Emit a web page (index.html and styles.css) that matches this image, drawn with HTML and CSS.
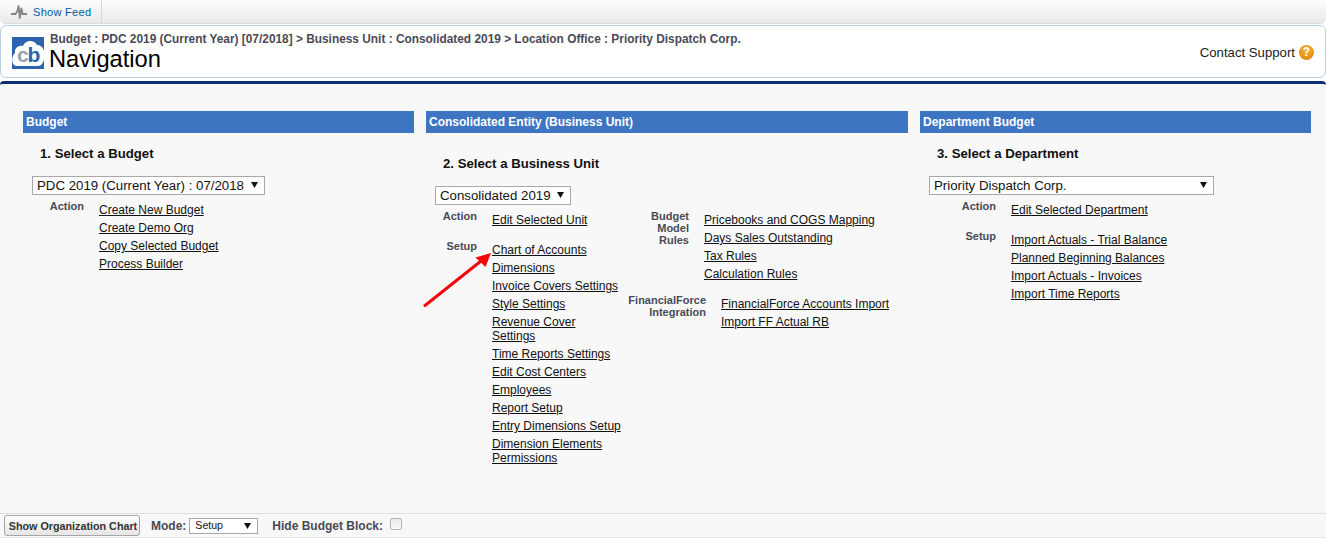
FILE: index.html
```html
<!DOCTYPE html>
<html lang="en">
<head>
    <meta charset="UTF-8">
    <meta name="viewport" content="width=device-width, initial-scale=1.0">
    <title>Navigation</title>
    <link rel="stylesheet" href="styles.css">
</head>
<body>

    <div class="feed-bar">
        <a href="#" class="feed-tab">
            <svg class="feed-icon" width="16" height="16" viewBox="0 0 16 16">
                <path d="M0 10H4.5L6.5 7L7.6 1.5L8.8 14.5L10.4 4L11.6 10H16" fill="none" stroke="#858585" stroke-width="1.8"/>
            </svg>
            Show Feed
        </a>
    </div>

    <div class="page-header">
        <div class="logo">
            <svg width="32" height="32" viewBox="0 0 32 32">
                <rect width="32" height="32" fill="#2c62ae"/>
                <path d="M5 29C-1 29 -1 19 3 16C2 11 7 8 11 9C13 3 22 2 25 8C30 8 33 13 32 17C33 22 31 29 26 29Z" fill="#fff"/>
                <text x="5" y="25" class="logo-c">c</text>
                <text x="15.5" y="25" class="logo-b">b</text>
            </svg>
        </div>
        <div class="header-text">
            <div class="breadcrumb">Budget : PDC 2019 (Current Year) [07/2018] &gt; Business Unit : Consolidated 2019 &gt; Location Office : Priority Dispatch Corp.</div>
            <h1>Navigation</h1>
        </div>
        <a href="#" class="support">
            Contact Support
            <span class="help-icon">?</span>
        </a>
    </div>

    <div class="main">
        <section class="col col-budget">
            <h2>Budget</h2>
            <h3>1. Select a Budget</h3>
            <select class="picker picker-budget">
                <option>PDC 2019 (Current Year) : 07/2018</option>
            </select>
            <div class="link-group label-budget">
                <span class="group-label">Action</span>
                <ul>
                    <li><a href="#">Create New Budget</a></li>
                    <li><a href="#">Create Demo Org</a></li>
                    <li><a href="#">Copy Selected Budget</a></li>
                    <li><a href="#">Process Builder</a></li>
                </ul>
            </div>
        </section>

        <section class="col col-unit">
            <h2>Consolidated Entity (Business Unit)</h2>
            <h3>2. Select a Business Unit</h3>
            <select class="picker picker-unit">
                <option>Consolidated 2019</option>
            </select>
            <div class="unit-columns">
                <div class="unit-left">
                    <div class="link-group label-unit">
                        <span class="group-label">Action</span>
                        <ul>
                            <li><a href="#">Edit Selected Unit</a></li>
                        </ul>
                    </div>
                    <div class="link-group label-unit setup-gap">
                        <span class="group-label">Setup</span>
                        <ul>
                            <li><a href="#">Chart of Accounts</a></li>
                            <li><a href="#">Dimensions</a></li>
                            <li><a href="#">Invoice Covers Settings</a></li>
                            <li><a href="#">Style Settings</a></li>
                            <li><a href="#">Revenue Cover Settings</a></li>
                            <li><a href="#">Time Reports Settings</a></li>
                            <li><a href="#">Edit Cost Centers</a></li>
                            <li><a href="#">Employees</a></li>
                            <li><a href="#">Report Setup</a></li>
                            <li><a href="#">Entry Dimensions Setup</a></li>
                            <li><a href="#">Dimension Elements Permissions</a></li>
                        </ul>
                    </div>
                </div>
                <div class="unit-right">
                    <div class="link-group label-model">
                        <span class="group-label">Budget<br>Model<br>Rules</span>
                        <ul>
                            <li><a href="#">Pricebooks and COGS Mapping</a></li>
                            <li><a href="#">Days Sales Outstanding</a></li>
                            <li><a href="#">Tax Rules</a></li>
                            <li><a href="#">Calculation Rules</a></li>
                        </ul>
                    </div>
                    <div class="link-group label-ff">
                        <span class="group-label">FinancialForce<br>Integration</span>
                        <ul>
                            <li><a href="#">FinancialForce Accounts Import</a></li>
                            <li><a href="#">Import FF Actual RB</a></li>
                        </ul>
                    </div>
                </div>
            </div>
        </section>

        <section class="col col-dept">
            <h2>Department Budget</h2>
            <h3>3. Select a Department</h3>
            <select class="picker picker-dept">
                <option>Priority Dispatch Corp.</option>
            </select>
            <div class="link-group label-dept">
                <span class="group-label">Action</span>
                <ul>
                    <li><a href="#">Edit Selected Department</a></li>
                </ul>
            </div>
            <div class="link-group label-dept setup-gap">
                <span class="group-label">Setup</span>
                <ul>
                    <li><a href="#">Import Actuals - Trial Balance</a></li>
                    <li><a href="#">Planned Beginning Balances</a></li>
                    <li><a href="#">Import Actuals - Invoices</a></li>
                    <li><a href="#">Import Time Reports</a></li>
                </ul>
            </div>
        </section>

        <!-- annotation drawn on top of the screenshot -->
        <svg class="arrow" width="70" height="56" viewBox="0 0 70 56">
            <path d="M2 54.5L58 10" stroke="#f5060c" stroke-width="3" stroke-linecap="round" fill="none"/>
            <path d="M68 2L52.5 6.5L62.5 16Z" fill="#f5060c"/>
        </svg>
    </div>

    <div class="footer">
        <button type="button" class="org-btn">Show Organization Chart</button>
        <label class="mode-label" for="mode">Mode:</label>
        <select id="mode" class="picker picker-mode">
            <option>Setup</option>
        </select>
        <label class="hide-label" for="hideBlock">Hide Budget Block:</label>
        <input type="checkbox" id="hideBlock" class="hide-check">
    </div>

</body>
</html>
```

FILE: styles.css
```css
/* Global */
body {
    font-family: 'Liberation Sans', Arial, sans-serif;
    margin: 0;
    padding: 0;
    background-color: #fff;
    color: #000;
    font-size: 12px;
}

/* Feed bar */
.feed-bar {
    height: 24px;
    width: 1326px;
    background: linear-gradient(#fdfdfd, #e9e9e9);
    border-bottom: 1px solid #dcdcdc;
    border-radius: 0 0 6px 6px;
    box-sizing: border-box;
    display: flex;
}

.feed-tab {
    width: 102px;
    box-sizing: border-box;
    padding-left: 11px;
    display: flex;
    align-items: center;
    gap: 6px;
    border-right: 1px solid #d5d5d5;
    color: #015ba7;
    text-decoration: none;
    font-size: 11px;
    letter-spacing: 0.3px;
}

/* Header */
.page-header {
    margin-top: 1px;
    height: 53px;
    width: 1326px;
    box-sizing: border-box;
    background-color: #fff;
    border: 1px solid #b5cfe3;
    border-radius: 6px;
    display: flex;
    align-items: flex-start;
}

.logo {
    margin: 11px 6px 0 11px;
    height: 32px;
}

.logo-c,
.logo-b {
    font-family: 'Liberation Sans', Arial, sans-serif;
    font-weight: bold;
    font-size: 21px;
}

.logo-c {
    fill: #98a1b0;
}

.logo-b {
    fill: #2c62ae;
}

.header-text {
    padding-top: 6px;
}

.breadcrumb {
    font-weight: bold;
    font-size: 11.88px;
    line-height: 14px;
    color: #4a4a56;
}

h1 {
    font-size: 23.7px;
    font-weight: normal;
    line-height: 27px;
    margin: 0 0 0 -1px;
}

.support {
    margin-left: auto;
    margin-top: 19px;
    margin-right: 11px;
    display: flex;
    align-items: center;
    gap: 4px;
    color: #222;
    text-decoration: none;
    font-size: 13.2px;
    line-height: 16px;
}

.help-icon {
    width: 15px;
    height: 15px;
    margin-top: -1px;
    border-radius: 50%;
    background: radial-gradient(circle at 50% 35%, #f9b233, #d9800c);
    color: #fff;
    font-weight: bold;
    font-size: 12px;
    line-height: 15px;
    text-align: center;
}

/* Main panel */
.main {
    position: relative;
    margin-top: 3px;
    width: 1326px;
    height: 432px;
    box-sizing: border-box;
    background-color: #f8f8f8;
    border-top: 3px solid #0b2f74;
    border-radius: 4px 4px 0 0;
    padding: 27px 15px 0 23px;
    display: flex;
    gap: 12px;
}

.col {
    min-width: 0;
}

.col-budget {
    width: 391px;
}

.col-unit {
    width: 482px;
}

.col-dept {
    width: 391px;
}

h2 {
    margin: 0;
    height: 22px;
    line-height: 22px;
    padding-left: 3px;
    background-color: #3d75c3;
    color: #fff;
    font-size: 12px;
    font-weight: bold;
}

h3 {
    margin: 13px 0 0 17px;
    font-size: 13.2px;
    line-height: 15px;
    font-weight: bold;
    color: #111;
}

.col-unit h3 {
    margin-top: 23px;
}

/* Selects */
.picker {
    display: block;
    appearance: none;
    box-sizing: border-box;
    margin: 15px 0 0 9px;
    height: 19px;
    padding: 0 0 1px 4px;
    border: 1px solid #a9a9a9;
    border-radius: 0;
    background: #fff url("data:image/svg+xml,%3Csvg xmlns='http://www.w3.org/2000/svg' width='7' height='6'%3E%3Cpath d='M0 0H7L3.5 6Z' fill='%23111'/%3E%3C/svg%3E") no-repeat right 6px top 5px;
    font-family: 'Liberation Sans', Arial, sans-serif;
    font-size: 13.25px;
    color: #111;
}

.picker-budget {
    width: 233px;
}

.picker-unit {
    width: 136px;
}

.picker-dept {
    width: 285px;
}

/* Link groups */
.link-group {
    display: flex;
    align-items: flex-start;
}

.group-label {
    flex: none;
    text-align: right;
    font-size: 11px;
    font-weight: bold;
    line-height: 12px;
    color: #4a4a56;
}

.link-group ul {
    list-style: none;
    margin: -1px 0 0;
    padding: 0 0 0 15px;
}

.link-group li {
    line-height: 14px;
    padding: 4px 0 0;
    font-size: 12px;
}

.link-group a {
    color: #111;
}

.col-budget .link-group,
.col-dept .link-group {
    margin-top: 5px;
}

.col-dept .setup-gap,
.col-unit .setup-gap {
    margin-top: 13px;
}

.label-budget .group-label {
    width: 61px;
}

.label-dept .group-label {
    width: 76px;
}

.unit-columns {
    display: flex;
    margin-top: 5px;
}

.unit-left {
    width: 196px;
    flex: none;
}

.label-unit .group-label {
    width: 51px;
}

.label-unit ul {
    width: 130px;
}

.label-model .group-label {
    width: 67px;
}

.label-ff {
    margin-top: 13px;
}

.label-ff .group-label {
    width: 84px;
}

/* Annotation */
.arrow {
    position: absolute;
    left: 423px;
    top: 167px;
}

/* Footer */
.footer {
    width: 1326px;
    height: 25px;
    box-sizing: border-box;
    background-color: #f8f8f8;
    border-top: 1px solid #dedede;
    border-bottom: 1px solid #e4e4e4;
    display: flex;
    align-items: center;
    padding-left: 4px;
}

.org-btn {
    width: 136px;
    height: 21px;
    padding: 0 0 0 2px;
    background: linear-gradient(#fdfdfd, #e6e6e6);
    border: 1px solid #a5a5a5;
    border-radius: 3px;
    font-family: 'Liberation Sans', Arial, sans-serif;
    font-size: 10.75px;
    font-weight: bold;
    color: #333;
}

.mode-label,
.hide-label {
    font-weight: bold;
    color: #4a4a56;
    font-size: 12px;
}

.mode-label {
    margin-left: 11px;
}

.picker-mode {
    margin: 0 0 0 3px;
    width: 69px;
    height: 16px;
    padding-left: 5px;
    font-size: 10.6px;
    background-position: right 6px top 4px;
}

.hide-label {
    margin-left: 14px;
}

.hide-check {
    appearance: none;
    margin: 0 0 4px 7px;
    width: 12px;
    height: 12px;
    border: 1px solid #b5b5b5;
    border-radius: 2px;
    background: linear-gradient(#e9e9e9, #fafafa);
}
```
